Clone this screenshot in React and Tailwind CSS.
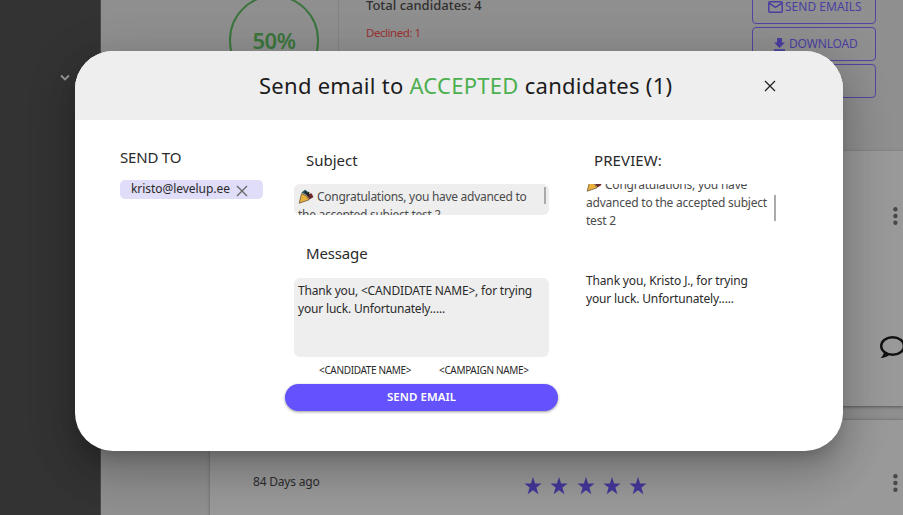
import React from "react";

const Popper = () => (
  <svg className="mr-[3px] inline-block h-[15px] w-[16px] align-[-3px]" viewBox="0 0 16 15">
    <path d="M3.5 3.5 L7 .8 L10.5 3.2 L10 7 Z" fill="#24505c" />
    <path d="M8 5.5 L13.5 4.2 L15.5 8 L11.5 10.5 Z" fill="#6b2a2c" />
    <path d="M3.6 4.5 Q9 6 11 10.8 L1.2 14.2 Z" fill="#e9b13c" stroke="#5d4526" strokeWidth=".7" />
    <path d="M7 2.5 L11 7 M11 3 L9.5 7" stroke="#222" strokeWidth="1.2" />
  </svg>
);

const Cross = ({ className }) => (
  <svg className={className} viewBox="0 0 12 12" fill="none" stroke="currentColor">
    <path d="M1 1 L11 11 M11 1 L1 11" strokeWidth="1.3" />
  </svg>
);

const Dots = () => (
  <svg className="h-[18px] w-[6px]" viewBox="0 0 6 18" fill="#484848">
    <circle cx="3.4" cy="2.3" r="2.2" />
    <circle cx="3.4" cy="9" r="2.2" />
    <circle cx="3.4" cy="15.7" r="2.2" />
  </svg>
);

const Star = () => (
  <svg className="h-[18px] w-[18px]" viewBox="0 0 18 18" fill="#43389a">
    <path d="M9 0 L11.1 6.4 H17.6 L12.4 10.5 L14.4 17.2 L9 13.2 L3.6 17.2 L5.6 10.5 L.4 6.4 H6.9 Z" />
  </svg>
);

const outline =
  "flex h-[34px] w-[124px] shrink-0 items-center rounded-[4px] border border-[#5046a0] text-[12px] text-[#4a3fa0]";

function Page() {
  return (
    <div className="flex h-full">
      <aside className="flex w-[101px] shrink-0 justify-end border-r border-[#4a4a4a] bg-[#333333] pr-[30px] pt-[74px]">
        <svg className="h-[8px] w-[10px]" viewBox="0 0 10 8" fill="none" stroke="#999" strokeWidth="1.8">
          <path d="M1 1.5 L5 5.5 L9 1.5" />
        </svg>
      </aside>
      <main className="flex min-w-0 grow flex-col bg-[#8f8f8f]">
        <div className="flex h-[151px] shrink-0">
          <div className="-mt-[5px] ml-[128px] flex h-[91px] w-[90px] shrink-0 items-center justify-center rounded-full border-2 border-[#3b753d] text-[22px] font-semibold tracking-[-0.4px] text-[#3b753d]">
            50%
          </div>
          <div className="ml-[19px] h-[60px] w-px bg-[#828282]" />
          <div className="-mt-[5px] ml-[27px] w-[386px] whitespace-nowrap">
            <div className="text-[13px] font-medium leading-[20px] text-[#303030]">Total candidates: 4</div>
            <div className="mt-[8px] text-[11.5px] leading-[20px] tracking-[-0.45px] text-[#9a3030]">Declined: 1</div>
          </div>
          <div className="-mt-[10px] flex flex-col gap-[3px]">
            <div className={outline}>
              <svg className="ml-[15px] h-[12px] w-[15px]" viewBox="0 0 15 12" fill="none" stroke="currentColor" strokeWidth="1.5">
                <rect x=".8" y=".8" width="13.4" height="10.4" rx="1" />
                <path d="M1 2 L7.5 6.3 L14 2" />
              </svg>
              <span className="ml-[2px] whitespace-nowrap tracking-[0.02px]">SEND EMAILS</span>
            </div>
            <div className={outline}>
              <svg className="ml-[21px] h-[13px] w-[11px]" viewBox="0 0 11 13" fill="currentColor">
                <path d="M3 0 H8 V4.5 H11 L5.5 10 L0 4.5 H3 Z M0 11.3 H11 V13 H0 Z" />
              </svg>
              <span className="ml-[4px] whitespace-nowrap tracking-[-0.15px]">DOWNLOAD</span>
            </div>
            <div className={outline} />
          </div>
        </div>
        <section className="ml-[109px] flex h-[255px] shrink-0 flex-col bg-[#999999] pt-[56px] shadow-[0_1px_3px_rgba(0,0,0,0.4)]">
          <div className="ml-[682px] h-[18px]">
            <Dots />
          </div>
          <svg className="ml-[669px] mt-[110px] h-[24px] w-[28px] shrink-0" viewBox="0 0 28 24">
            <ellipse cx="13.6" cy="11" rx="11.4" ry="8.8" fill="none" stroke="#111" strokeWidth="2.4" />
            <path d="M5 16 Q5 20 1.5 23 Q7 23 11 19.2 Z" fill="#111" />
          </svg>
        </section>
        <section className="ml-[109px] mt-[14px] flex h-[120px] shrink-0 bg-[#999999] shadow-[0_0_3px_rgba(0,0,0,0.3)]">
          <div className="ml-[43px] mt-[52px] w-[271px] text-[12px] leading-[20px] tracking-[-0.2px] text-[#2c2c2c]">
            84 Days ago
          </div>
          <div className="mt-[57px] flex w-[368px] gap-[8.3px]">
            <Star />
            <Star />
            <Star />
            <Star />
            <Star />
          </div>
          <div className="mt-[54px]">
            <Dots />
          </div>
        </section>
      </main>
    </div>
  );
}

function Dialog() {
  return (
    <div className="absolute left-[75px] top-[51px] flex h-[400px] w-[768px] flex-col overflow-hidden rounded-[38px] bg-white text-[#2a2a2a] shadow-[0_11px_15px_-7px_rgba(0,0,0,0.2),0_24px_38px_3px_rgba(0,0,0,0.14),0_9px_46px_8px_rgba(0,0,0,0.12)]">
      <header className="flex h-[69px] shrink-0 items-center bg-[#eeeeee]">
        <h1 className="-mt-[2px] ml-[184px] w-[505px] whitespace-nowrap text-[22px] leading-[30px] tracking-[0.27px] text-[#1c1c1c]">
          Send email to <span className="text-[#4caf50]">ACCEPTED</span> candidates (1)
        </h1>
        <Cross className="h-[12px] w-[12px] text-[#222]" />
      </header>
      <div className="flex whitespace-nowrap">
        <div className="ml-[45px] w-[165px] pt-[27px]">
          <h2 className="text-[15px] leading-[20px] tracking-[-0.2px]">SEND TO</h2>
          <div className="mt-[13px] flex h-[19px] w-[143px] items-center rounded-[5px] bg-[#dfddf8] pl-[11px] text-[12px]">
            <span className="-mt-[2px] w-[105px] tracking-[-0.05px]">kristo@levelup.ee</span>
            <Cross className="mt-[2px] h-[12px] w-[12px] text-[#666]" />
          </div>
        </div>
        <div className="flex w-[273px] flex-col pt-[30px]">
          <h2 className="ml-[21px] text-[15px] leading-[20px]">Subject</h2>
          <div className="ml-[9px] mt-[14px] flex h-[31px] w-[255px] justify-between overflow-hidden rounded-[6px] bg-[#eeeeee] pl-[4px] pr-[3px] text-[12px] leading-[18px] tracking-[-0.28px] text-[#4b4b4b]">
            <div className="pt-[4px]">
              <Popper />
              Congratulations, you have advanced to
              <br />
              the accepted subject test 2
            </div>
            <div className="mt-[3px] h-[17px] w-[2px] bg-[#aaa]" />
          </div>
          <h2 className="ml-[21px] mt-[28px] text-[15px] leading-[20px] tracking-[-0.15px]">Message</h2>
          <div className="ml-[9px] mt-[15px] h-[79px] w-[255px] rounded-[6px] bg-[#eeeeee] pl-[4px] pt-[4px] text-[12px] leading-[18px] tracking-[-0.18px]">
            Thank you, &lt;CANDIDATE NAME&gt;, for trying
            <br />
            your luck. Unfortunately.....
          </div>
          <div className="mt-[5px] flex h-[16px] text-[10px] leading-[16px] tracking-[-0.34px]">
            <span className="ml-[34px] w-[120px]">&lt;CANDIDATE NAME&gt;</span>
            <span>&lt;CAMPAIGN NAME&gt;</span>
          </div>
          <div className="mt-[6px] flex h-[27px] items-center justify-center rounded-full bg-[#6352fd] pb-[1px] text-[11.5px] font-semibold tracking-[0.05px] text-white shadow-[0_1px_3px_rgba(0,0,0,0.4)]">
            SEND EMAIL
          </div>
        </div>
        <div className="ml-[28px] pt-[30px] text-[12px] leading-[18px]">
          <h2 className="ml-[8px] text-[15px] leading-[20px] tracking-[0.1px]">PREVIEW:</h2>
          <div className="mt-[14px] flex h-[48px] w-[190px] justify-between overflow-hidden tracking-[-0.23px] text-[#4b4b4b]">
            <div className="-mt-[8px]">
              <Popper />
              Congratulations, you have
              <br />
              advanced to the accepted subject
              <br />
              test 2
            </div>
            <div className="mt-[11px] h-[26px] w-[2px] shrink-0 bg-[#aaa]" />
          </div>
          <div className="mt-[40px] tracking-[-0.15px]">
            Thank you, Kristo J., for trying
            <br />
            your luck. Unfortunately.....
          </div>
        </div>
      </div>
    </div>
  );
}

export default function App() {
  return (
    <div className="relative h-[515px] w-[903px] overflow-hidden font-['Noto_Sans','Open_Sans',sans-serif]">
      <Page />
      <Dialog />
    </div>
  );
}
